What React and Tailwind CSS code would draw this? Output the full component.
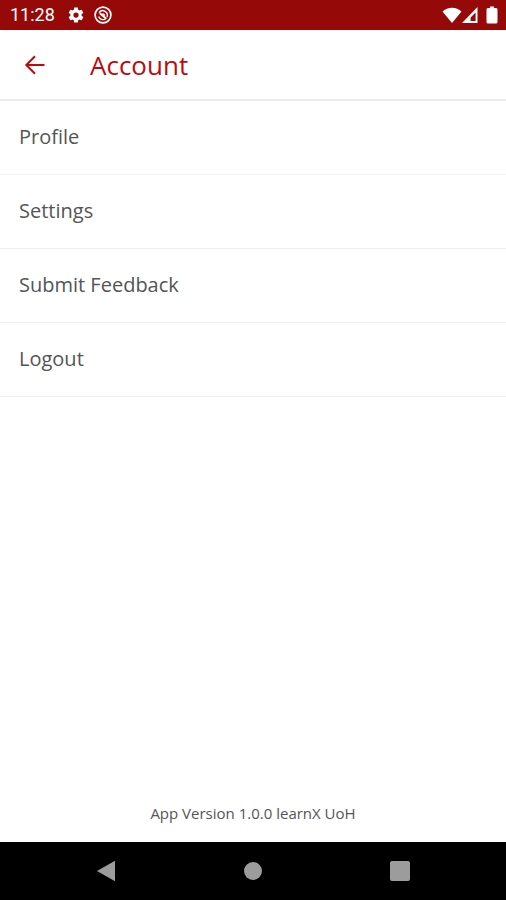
const menu = ['Profile', 'Settings', 'Submit Feedback', 'Logout'];

function GearIcon() {
  return (
    <svg viewBox="0 0 24 24" className="size-[18px]" fill="currentColor" aria-hidden="true">
      <path d="M19.43 12.98c.04-.32.07-.64.07-.98s-.03-.66-.07-.98l2.11-1.65c.19-.15.24-.42.12-.64l-2-3.46c-.12-.22-.39-.3-.61-.22l-2.49 1c-.52-.4-1.08-.73-1.69-.98l-.38-2.65A.488.488 0 0 0 14 2h-4c-.25 0-.46.18-.49.42l-.38 2.65c-.61.25-1.17.59-1.69.98l-2.49-1c-.23-.09-.49 0-.61.22l-2 3.46c-.13.22-.07.49.12.64l2.11 1.65c-.04.32-.07.65-.07.98s.03.66.07.98l-2.11 1.65c-.19.15-.24.42-.12.64l2 3.46c.12.22.39.3.61.22l2.49-1c.52.4 1.08.73 1.69.98l.38 2.65c.03.24.24.42.49.42h4c.25 0 .46-.18.49-.42l.38-2.65c.61-.25 1.17-.59 1.69-.98l2.49 1c.23.09.49 0 .61-.22l2-3.46c.12-.22.07-.49-.12-.64l-2.11-1.65zM12 15.5a3.5 3.5 0 1 1 0-7 3.5 3.5 0 0 1 0 7z" />
    </svg>
  );
}

function DndIcon() {
  return (
    <svg viewBox="0 0 18 18" className="size-[18px]" fill="none" stroke="currentColor" aria-hidden="true">
      <circle cx="9" cy="9" r="7.9" strokeWidth="1.7" />
      <path d="M5 6.600A4.600 4.600 0 0 1 13 11M11.500 12.900A4.600 4.600 0 0 1 4.700 10.500" strokeWidth="1.4" />
      <path d="M5.800 7.200l6.600 5.600" strokeWidth="1.900" />
      <path d="M8.500 7.500l2.500 2" strokeWidth="1.400" />
    </svg>
  );
}

function StatusBar() {
  return (
    <div className="flex h-[30px] items-center bg-[#960909] pr-2 pl-[10px] text-white">
      <span className="font-[Roboto,sans-serif] text-[18px] leading-6">11:28</span>
      <div className="ml-3 flex gap-[9px]">
        <GearIcon />
        <DndIcon />
      </div>
      <div className="ml-auto flex items-center" aria-hidden="true">
        <svg viewBox="0 0 20 16" className="h-4 w-5" fill="currentColor">
          <path d="M10 16L.5 4.400C3 2.100 6.300.7 10 .7s7 1.400 9.500 3.700z" />
        </svg>
        <svg viewBox="0 0 16 16" className="size-4" fill="currentColor" fillRule="evenodd">
          <path d="M15.500 0v16H0zM13.600 5.500l-5 5v3.500h5z" />
        </svg>
        <svg viewBox="0 0 12 18" className="ml-2 h-[18px] w-3" fill="currentColor">
          <path d="M4 .5h4v1.500h2q1.500 0 1.500 1.500v12.500q0 1.500-1.500 1.500H2q-1.500 0-1.500-1.500V3.500Q.5 2 2 2h2z" />
        </svg>
      </div>
    </div>
  );
}

function NavBar() {
  return (
    <nav className="grid h-[58px] grid-cols-3 place-items-center bg-black px-8 text-[#9c9c9c]">
      <button type="button" aria-label="Back">
        <svg viewBox="0 0 20 22" className="h-[22px] w-5" fill="currentColor">
          <path d="M19 .8v20.400L1 11z" />
        </svg>
      </button>
      <button type="button" aria-label="Home" className="size-[18px] rounded-full bg-current" />
      <button type="button" aria-label="Recent apps" className="size-5 rounded-xs bg-current" />
    </nav>
  );
}

export default function App() {
  return (
    <div className="flex min-h-screen flex-col bg-white font-['Open_Sans',sans-serif] text-[#555]">
      <StatusBar />
      <header className="flex h-[71px] items-center border-b-2 border-[#ececec] text-[#bd0b0b]">
        <button type="button" aria-label="Go back" className="ml-6">
          <svg viewBox="0 0 22 22" className="size-[22px]" fill="none" stroke="currentColor" strokeWidth="2">
            <path d="M20.500 11H2.500M11 2.200L2.300 11l8.700 8.800" />
          </svg>
        </button>
        <h1 className="ml-11 text-[26px] leading-8 font-medium">Account</h1>
      </header>
      <main className="flex flex-1 flex-col">
        <ul>
          {menu.map((item) => (
            <li key={item} className="border-b border-[#f0f0f0]">
              <button type="button" className="h-[73px] w-full px-[19px] pb-0.5 text-left text-xl">
                {item}
              </button>
            </li>
          ))}
        </ul>
        <p className="mt-auto pb-[19px] text-center text-[15px] leading-5">App Version 1.0.0 learnX UoH</p>
      </main>
      <NavBar />
    </div>
  );
}
